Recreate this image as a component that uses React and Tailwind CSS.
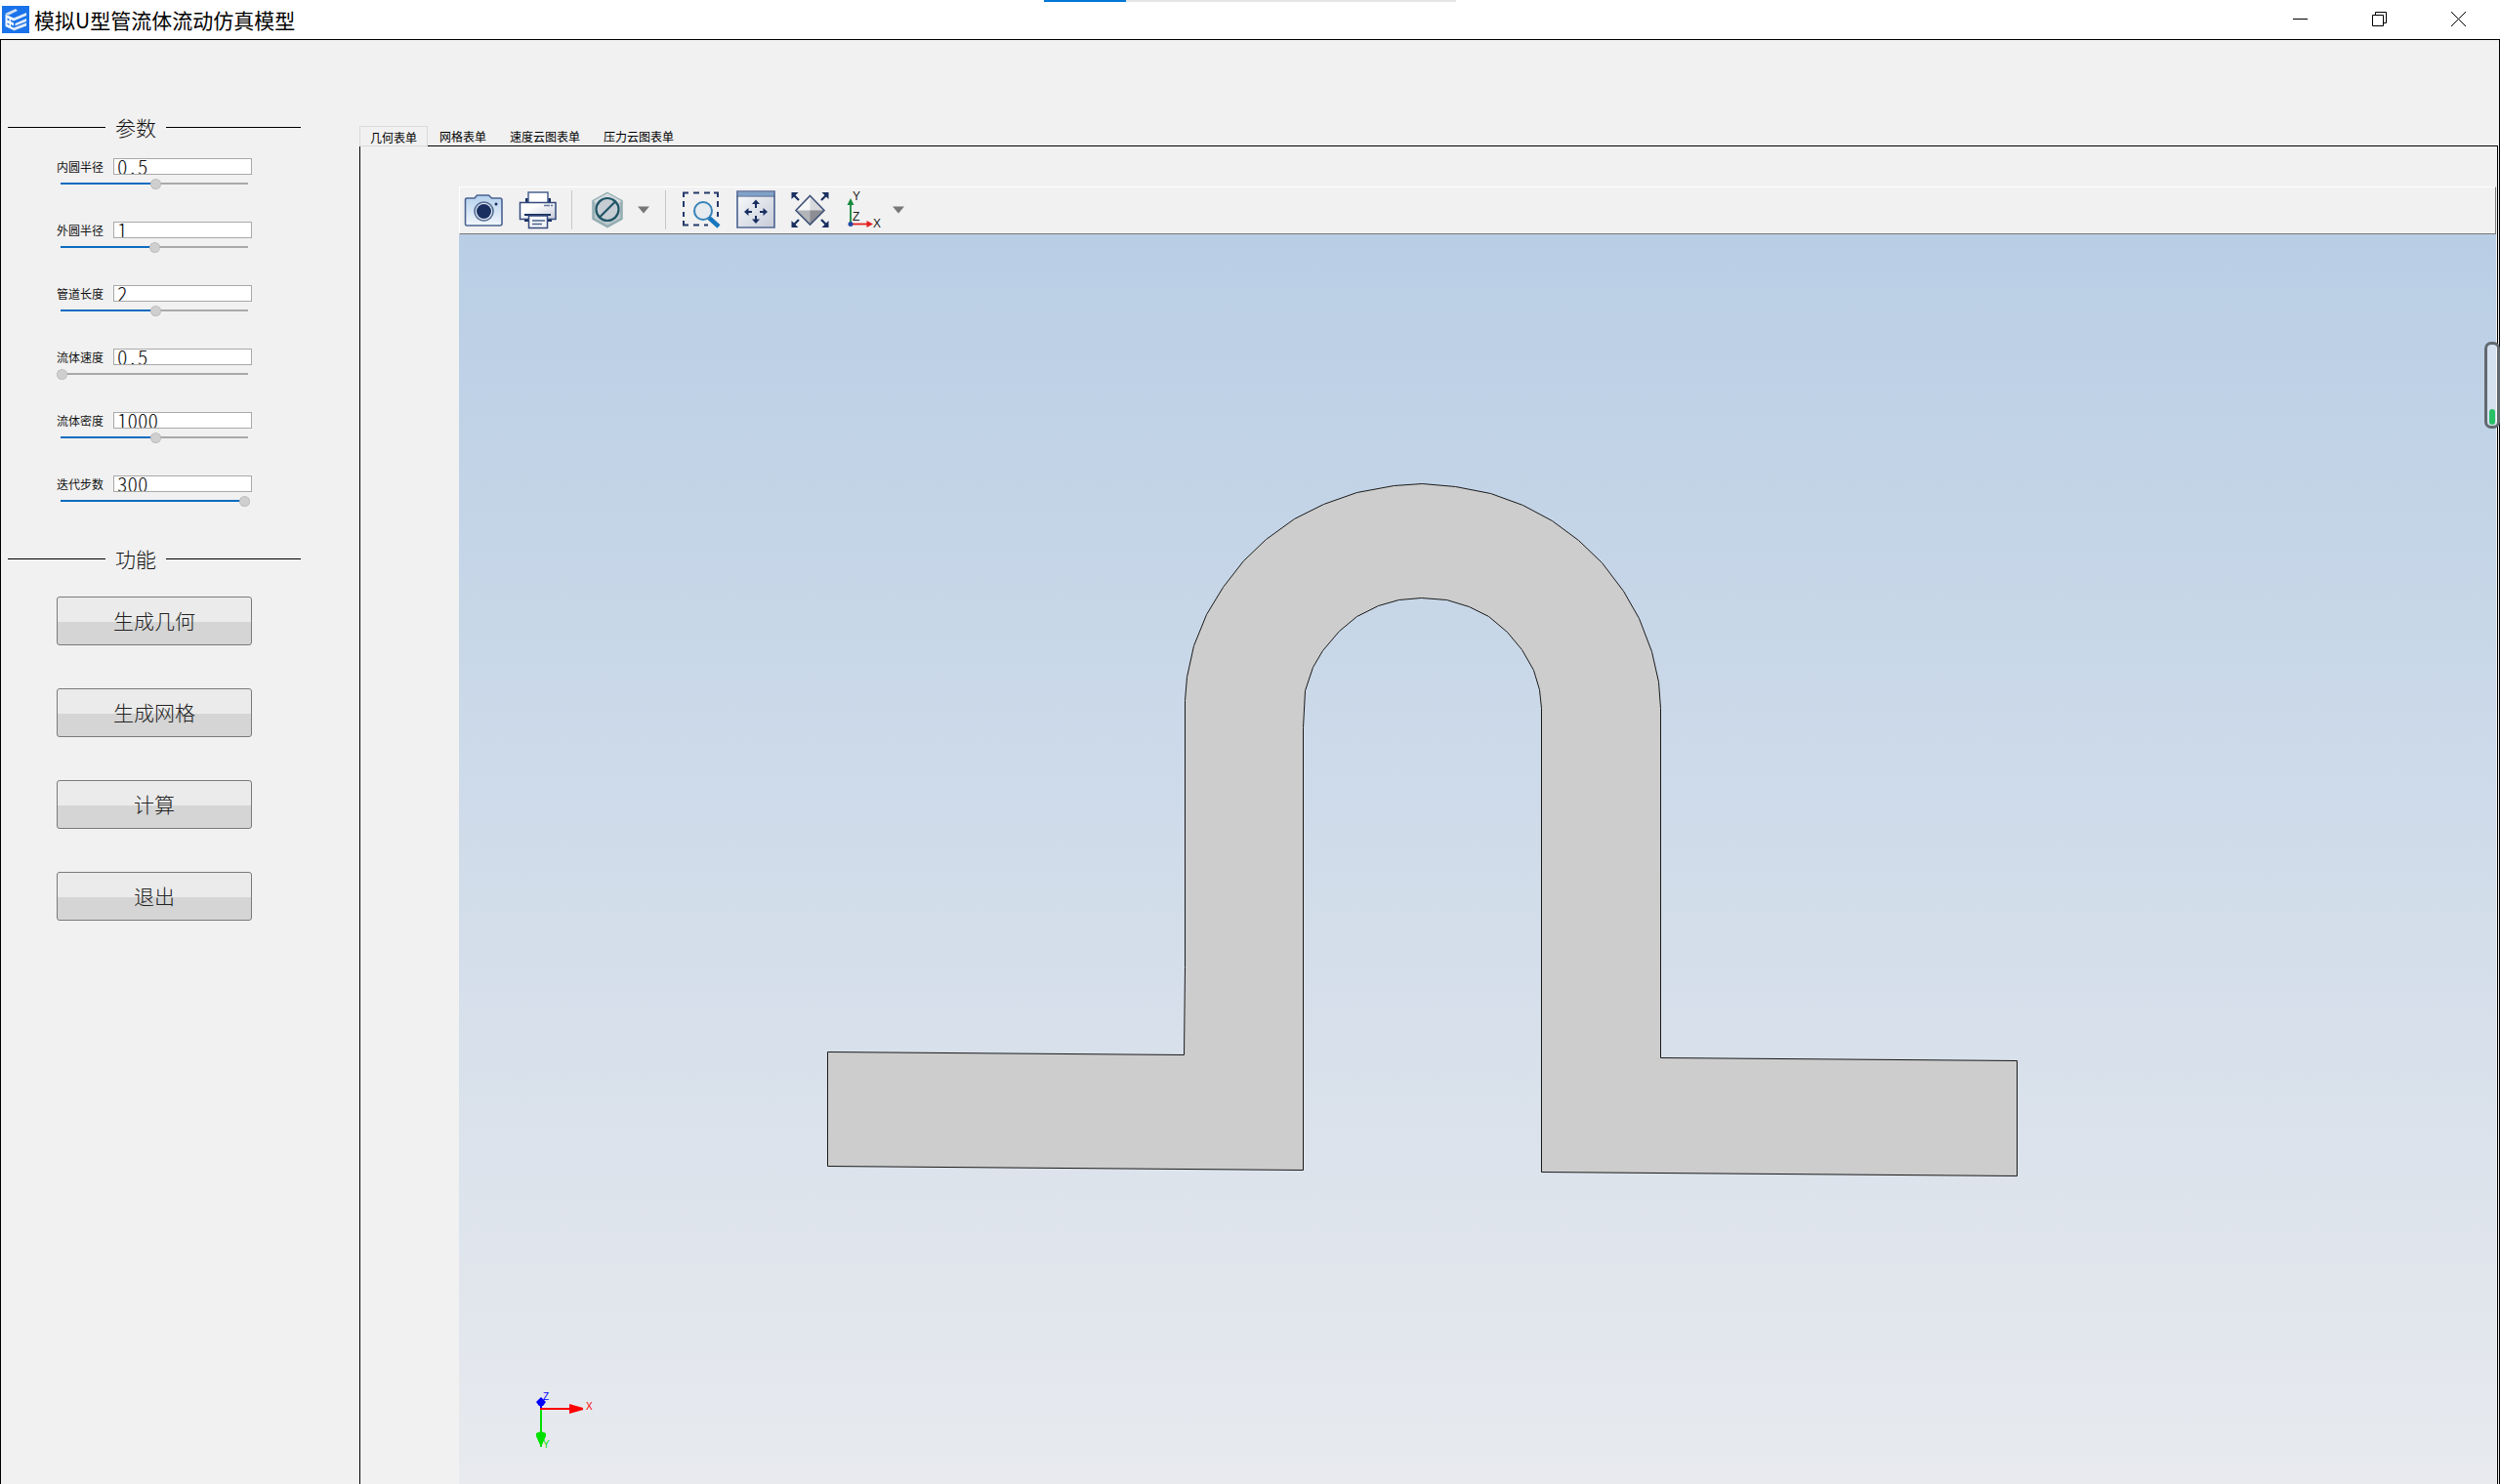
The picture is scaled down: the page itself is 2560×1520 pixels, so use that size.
import { useState } from 'react'

const FIELDS = [
  { id: 'inner-radius', label: '内圆半径', value: '0.5', position: 51 },
  { id: 'outer-radius', label: '外圆半径', value: '1', position: 50 },
  { id: 'pipe-length', label: '管道长度', value: '2', position: 51 },
  { id: 'velocity', label: '流体速度', value: '0.5', position: 0 },
  { id: 'density', label: '流体密度', value: '1000', position: 51 },
  { id: 'iterations', label: '迭代步数', value: '300', position: 99 },
]

const ACTIONS = ['生成几何', '生成网格', '计算', '退出']

const TABS = ['几何表单', '网格表单', '速度云图表单', '压力云图表单']

const OUTLINE =
  'M847 1077 L1212 1080 L1213 990 L1213 717 L1215 693 L1222 661 L1235 629 L1252 601 L1273 574 L1296 552 L1325 531 L1355 516 L1389 504 L1427 497 L1456 495 L1490 498 L1526 505 L1559 517 L1589 533 L1616 553 L1640 576 L1662 605 L1678 633 L1691 667 L1698 698 L1700 725 L1700 1083 L2065 1086 L2065 1204 L1578 1200 L1578 725 L1576 706 L1570 686 L1558 665 L1543 647 L1524 631 L1504 621 L1481 614 L1455 612 L1432 614 L1411 620 L1389 631 L1371 646 L1354 666 L1344 683 L1336 707 L1334 745 L1334 1198 L847 1194 Z'

function AppLogo() {
  return (
    <svg viewBox="0 0 28 28" className="h-7 w-7">
      <rect width="28" height="28" fill="#1a73ea" />
      <path d="M3 8 L14 3 L16 5 L7 9.500 Z" fill="#d3e0f0" />
      <path d="M3.500 8.500 L12 12.500 V25 L3.500 21 Z" fill="#f5f9ff" />
      <path d="M5.500 12.500 L7.500 13.500 V15.500 L5.500 14.500 Z M9 14 L12 15.500 V17.500 L9 16 Z M5.500 17.500 L7.500 18.500 V20 L5.500 19 Z M9 19 L12 20.500 V22.500 L9 21 Z" fill="#1a73ea" />
      <path d="M12 12.500 L25 7 V10 L12 15.500 Z M13.500 18 L25 13 V16 L13.500 20.500 Z M12 22.500 L25 17.500 V20.500 L12 25.500 Z" fill="#e3ecf7" />
    </svg>
  )
}

function TitleBar() {
  return (
    <header className="relative flex h-10 shrink-0 items-center bg-white pl-0.5 pr-0.5">
      <AppLogo />
      <h1 className="ml-[5px] text-[21px] leading-7 text-black">模拟U型管流体流动仿真模型</h1>
      <div className="absolute left-1/2 top-0 h-0.5 w-[422px] -translate-x-1/2 bg-[#e5e5e5]">
        <div className="h-full w-1/5 bg-[#0078d7]" />
      </div>
      <div className="ml-auto flex h-full pb-0.5">
        <button aria-label="最小化" className="flex w-[81px] items-center justify-center">
          <svg viewBox="0 0 15 15" className="h-[15px] w-[15px]" stroke="#000" fill="none">
            <path d="M0 7.500 H15" />
          </svg>
        </button>
        <button aria-label="还原" className="flex w-[81px] items-center justify-center">
          <svg viewBox="0 0 15 15" className="h-[15px] w-[15px]" stroke="#000" fill="none">
            <path d="M0.500 3.500 H11.500 V14.500 H0.500 Z M3.500 3.500 V0.500 H14.500 V11.500 H11.500" />
          </svg>
        </button>
        <button aria-label="关闭" className="flex w-[81px] items-center justify-center">
          <svg viewBox="0 0 15 15" className="h-[15px] w-[15px]" stroke="#000" fill="none">
            <path d="M0 0 L15 15 M15 0 L0 15" />
          </svg>
        </button>
      </div>
    </header>
  )
}

function SectionTitle({ children }) {
  return (
    <div className="flex w-[300px] items-center gap-2.5">
      <span className="h-px w-[100px] bg-black" />
      <h2 className="text-[21px] font-light leading-7 text-[#111]">{children}</h2>
      <span className="h-px flex-1 bg-black" />
    </div>
  )
}

function Field({ id, label, value, position }) {
  const [text, setText] = useState(value)
  const [pos, setPos] = useState(position)
  return (
    <div className="w-[200px]">
      <div className="flex h-[17px] items-center">
        <label htmlFor={id} className="w-[58px] text-xs text-[#111]">{label}</label>
        <input
          id={id}
          type="text"
          value={text}
          onChange={(e) => setText(e.target.value)}
          className="h-[17px] min-w-0 flex-1 border border-[#a9a9a9] bg-white pl-[3px] text-[21px] font-light text-[#111] outline-none [font-feature-settings:'hwid']"
        />
      </div>
      <input
        type="range"
        aria-label={label}
        min="0"
        max="100"
        value={pos}
        onChange={(e) => setPos(Number(e.target.value))}
        style={{ backgroundImage: `linear-gradient(to right, #0d6cbf ${pos}%, #a9a9a9 ${pos}%)` }}
        className="mt-[3px] block h-3 w-full appearance-none bg-transparent bg-[length:192px_2px] bg-center bg-no-repeat [&::-webkit-slider-thumb]:h-[11px] [&::-webkit-slider-thumb]:w-[11px] [&::-webkit-slider-thumb]:appearance-none [&::-webkit-slider-thumb]:rounded-full [&::-webkit-slider-thumb]:border [&::-webkit-slider-thumb]:border-dotted [&::-webkit-slider-thumb]:border-[#aaa] [&::-webkit-slider-thumb]:bg-[#cfcfcf]"
      />
    </div>
  )
}

function Sidebar() {
  return (
    <aside className="w-[367px] shrink-0 pl-[7px] pt-[75px]">
      <SectionTitle>参数</SectionTitle>
      <div className="mt-[18px] flex flex-col gap-[33px] pl-[50px]">
        {FIELDS.map((field) => (
          <Field key={field.id} {...field} />
        ))}
      </div>
      <div className="mt-[39px]">
        <SectionTitle>功能</SectionTitle>
      </div>
      <div className="mt-[25px] flex flex-col gap-11 pl-[50px]">
        {ACTIONS.map((action) => (
          <button
            key={action}
            className="h-[50px] w-[200px] rounded-[3px] border border-[#7a7a7a] bg-linear-to-b from-[#ebebeb] from-52% to-[#d5d5d5] to-52% text-[21px] font-light text-[#222]"
          >
            {action}
          </button>
        ))}
      </div>
    </aside>
  )
}

function ToolButton({ label, children }) {
  return (
    <button aria-label={label} className="h-10 w-10">
      <svg viewBox="0 0 40 40" className="h-10 w-10" fill="none">
        {children}
      </svg>
    </button>
  )
}

function Caret({ label }) {
  return (
    <button aria-label={label} className="flex h-10 w-3 items-center">
      <svg viewBox="0 0 12 8" className="h-2 w-3">
        <path d="M0 0.500 H12 L6 7.500 Z" fill="#777" />
      </svg>
    </button>
  )
}

function Separator() {
  return <span className="h-10 w-px bg-[#c8c8c8]" />
}

function Toolbar() {
  return (
    <div className="flex h-[49px] items-start border-b border-l border-r border-t border-b-[#787878] border-l-white border-r-[#787878] border-t-white pl-1 pt-[3px]">
      <div className="flex gap-4">
        <ToolButton label="截图">
          <defs>
            <linearGradient id="camera" x1="0" y1="0" x2="0" y2="1">
              <stop offset="0" stopColor="#b4d0ec" />
              <stop offset="1" stopColor="#f1f6fc" />
            </linearGradient>
          </defs>
          <path d="M3 8 H11 L13.500 5 H25.500 L28.500 8 H37 Q39 8 39 10 V34 Q39 36 37 36 H3 Q1.500 36 1.500 34 V10 Q1.500 8 3 8 Z" fill="url(#camera)" stroke="#4a6390" strokeWidth="1.600" />
          <circle cx="20.500" cy="21.500" r="9.500" fill="#e3edf7" stroke="#51698f" strokeWidth="1.600" />
          <circle cx="20.500" cy="21.500" r="7.500" fill="#182f60" />
          <circle cx="33" cy="14" r="1.500" fill="#182f60" />
        </ToolButton>
        <ToolButton label="打印">
          <defs>
            <linearGradient id="printer" x1="0" y1="0" x2="1" y2="1">
              <stop offset="0.300" stopColor="#ffffff" />
              <stop offset="1" stopColor="#c3c9d8" />
            </linearGradient>
          </defs>
          <path d="M7 8 H33 V12 H7 Z M6 27 H34 V32 H6 Z" fill="#182f60" />
          <path d="M10 2 H30 V13 H10 Z" fill="#fff" stroke="#4a6390" strokeWidth="1.500" />
          <path d="M1.500 12.500 H38 V29.500 H1.500 Z" fill="url(#printer)" stroke="#34497c" strokeWidth="1.500" />
          <path d="M26 15.500 H32 M33 15.500 H35" stroke="#66769c" strokeWidth="1.500" />
          <path d="M6 25 H33" stroke="#182f60" strokeWidth="2" />
          <path d="M10.500 26 H29.500 V38.500 H10.500 Z" fill="#f4f6fa" stroke="#34497c" strokeWidth="1.500" />
          <path d="M14 31 H27 M14 34.500 H24" stroke="#4a6390" strokeWidth="1.300" />
        </ToolButton>
      </div>
      <div className="ml-3.5 mr-4 flex">
        <Separator />
      </div>
      <ToolButton label="剖切">
        <path d="M20 3 L34.500 11 V29 L20 37 L5.500 29 V11 Z" fill="#bcc9cc" stroke="#93adb2" strokeWidth="2.500" />
        <path d="M20 3 L34.500 11 L20 20 L5.500 11 Z" fill="#d5dcdf" />
        <circle cx="20" cy="19.500" r="11.500" fill="#c6cdd3" stroke="#1f5566" strokeWidth="2.200" />
        <path d="M28 11.500 L12 27.500" stroke="#1f5566" strokeWidth="2.200" />
      </ToolButton>
      <div className="ml-[11px] mr-4 flex items-center gap-4">
        <Caret label="剖切选项" />
        <Separator />
      </div>
      <div className="flex gap-4">
        <ToolButton label="框选缩放">
          <path d="M2 7 V2.500 H7 M12 2.500 H18 M23 2.500 H29 M33 2.500 H37 V7 M37 11 V17 M37 22 V27 M2 11 V17 M2 22 V27 M2 31 V35.500 H7 M12 35.500 H18 M23 35.500 H27" stroke="#253a6b" strokeWidth="2" />
          <path d="M28 28 L38 37" stroke="#1776bd" strokeWidth="4.500" />
          <circle cx="22" cy="21" r="9" fill="#e6ebf0" stroke="#3583b8" strokeWidth="2" />
        </ToolButton>
        <ToolButton label="平移">
          <defs>
            <linearGradient id="pan" x1="0" y1="0" x2="1" y2="1">
              <stop offset="0" stopColor="#fbfcfd" />
              <stop offset="1" stopColor="#c5cad7" />
            </linearGradient>
          </defs>
          <path d="M1 1 H39 V38 H1 Z" fill="url(#pan)" stroke="#526a96" strokeWidth="1.700" />
          <path d="M2 2 H38 V5.500 H2 Z" fill="#7fa2c9" />
          <path d="M1 6 H39" stroke="#385583" />
          <path d="M20 12 V18 M20 26 V31 M10 22 H16 M24 22 H30" stroke="#182f60" strokeWidth="2" />
          <path d="M20 9.500 L24 14 H16 Z M20 34 L24 29.500 H16 Z M8 22 L12.500 18 V26 Z M32 22 L27.500 18 V26 Z" fill="#182f60" />
        </ToolButton>
        <ToolButton label="适应窗口">
          <path d="M19.500 5.500 L34 20.500 L19.500 35 L5 20.500 Z" fill="#f7f7f8" />
          <path d="M19.500 5.500 V20.500 H34 Z" fill="#d8d9dc" />
          <path d="M5 20.500 H34 L19.500 35 Z" fill="#b2b4b8" />
          <path d="M19.500 20.500 H34 L19.500 35 Z" fill="#8c8e93" />
          <path d="M19.500 5.500 L34 20.500 L19.500 35 L5 20.500 Z" stroke="#405379" strokeWidth="1.600" />
          <path d="M2 4 L8 10 M37 4 L31 10 M2 36 L8 30 M37 36 L31 30" stroke="#182f60" strokeWidth="2.200" />
          <path d="M0.500 2 H7.500 L0.500 9 Z M38.500 2 H31.500 L38.500 9 Z M0.500 38 H7.500 L0.500 31 Z M38.500 38 H31.500 L38.500 31 Z" fill="#182f60" />
        </ToolButton>
        <ToolButton label="视图方向">
          <path d="M5 35 V13" stroke="#178a3c" strokeWidth="1.800" />
          <path d="M5 8 L8.500 15 H1.500 Z" fill="#178a3c" />
          <path d="M5 34.500 H23" stroke="#e51f1f" strokeWidth="1.800" />
          <path d="M28 34.500 L21.500 31 V38 Z" fill="#e51f1f" />
          <circle cx="5" cy="34.500" r="2.500" fill="#2348a5" />
          <g fill="#222" className="font-['Liberation_Sans',sans-serif] text-xs">
            <text x="7" y="10">Y</text>
            <text x="7" y="31">Z</text>
            <text x="28" y="38">X</text>
          </g>
        </ToolButton>
      </div>
      <div className="ml-2 flex">
        <Caret label="视图选项" />
      </div>
    </div>
  )
}

function Viewport() {
  return (
    <div className="relative flex-1 overflow-hidden bg-linear-to-b from-[#b9cee5] to-[#e8eaee]">
      <svg viewBox="470 240 2086 1280" className="absolute inset-0 h-full w-full">
        <path d={OUTLINE} transform="translate(0.500 0.500)" fill="#cdcdcd" stroke="#1a1a1a" />
      </svg>
      <svg viewBox="0 0 80 80" className="absolute bottom-[30px] left-[70px] h-20 w-20">
        <path d="M14 33 V22" stroke="#0000ff" strokeWidth="2" />
        <path d="M14 21 L19 26 L16 30 H12 L9 26 Z" fill="#0000ff" />
        <path d="M14 33 V60" stroke="#00e000" strokeWidth="2" />
        <path d="M9 58 L14 56 L19 58 V61 L15 70 V72 H13 V70 L9 61 Z" fill="#00e000" />
        <path d="M13 33 H44" stroke="#ff0000" strokeWidth="2" />
        <path d="M43 28 L57 32 V34 L43 38 Z" fill="#ff0000" />
        <g className="font-['Liberation_Sans',sans-serif] text-[10px]">
          <text x="16" y="24" fill="#0000ff">Z</text>
          <text x="60" y="34" fill="#ff0000">X</text>
          <text x="16" y="73" fill="#00e000">Y</text>
        </g>
      </svg>
    </div>
  )
}

function Workspace() {
  return (
    <main className="mr-px flex min-w-0 flex-1 flex-col pt-[88px]">
      <div role="tablist" className="flex h-5 text-xs leading-[22px] text-black">
        {TABS.map((tab, i) => (
          <button
            key={tab}
            role="tab"
            aria-selected={i === 0}
            className={
              i === 0
                ? 'z-10 h-[21px] border border-[#d9d9d9] bg-[#f1f1f1] px-2.5'
                : 'h-[21px] px-3'
            }
          >
            {tab}
          </button>
        ))}
      </div>
      <div className="flex flex-1 flex-col border-l border-r border-t border-black pl-[101px] pr-px pt-[41px]">
        <Toolbar />
        <Viewport />
      </div>
    </main>
  )
}

export default function App() {
  return (
    <div className="relative flex h-screen flex-col overflow-hidden bg-[#f1f1f1] font-['Noto_Sans_CJK_SC',sans-serif]">
      <TitleBar />
      <div className="flex min-h-0 flex-1 border-l border-r border-t border-black">
        <Sidebar />
        <Workspace />
      </div>
      <div className="absolute right-0 top-[350px] flex h-[89px] w-4 items-end justify-center rounded-[7px] border-[3px] border-[#62696f] bg-white/35 bg-clip-padding pb-px">
        <span className="h-4 w-1.5 rounded-full bg-[#27c065]" />
      </div>
    </div>
  )
}
